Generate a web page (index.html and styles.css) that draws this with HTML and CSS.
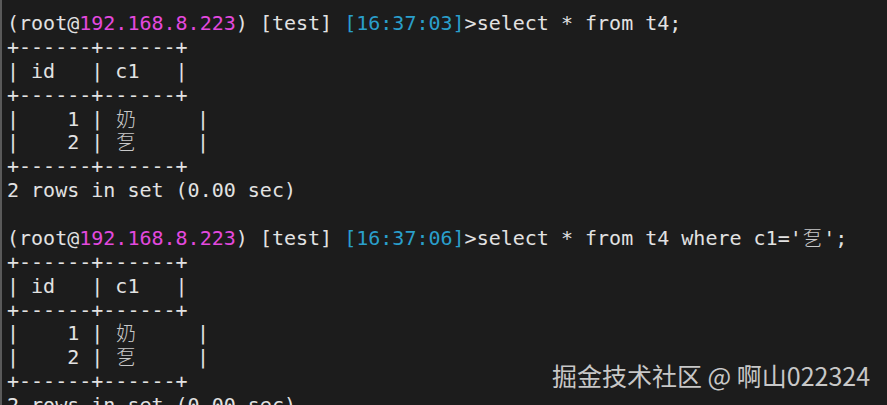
FILE: index.html
```html
<!DOCTYPE html>
<html lang="zh">
<head>
<meta charset="utf-8">
<link rel="stylesheet" href="styles.css">
</head>
<body>
<div class="term">
<div class="line">(root@<span class="ip">192.168.8.223</span>) [test] <span class="ts">[16:37:03]</span>&gt;select * from t4;</div>
<div class="line">+------+------+</div>
<div class="line">| id   | c1   |</div>
<div class="line">+------+------+</div>
<div class="line">|    1 | <span class="wide">奶</span>     |</div>
<div class="line">|    2 | <span class="wide">乭</span>     |</div>
<div class="line">+------+------+</div>
<div class="line">2 rows in set (0.00 sec)</div>
<div class="line"> </div>
<div class="line">(root@<span class="ip">192.168.8.223</span>) [test] <span class="ts">[16:37:06]</span>&gt;select * from t4 where c1='<span class="wide">乭</span>';</div>
<div class="line">+------+------+</div>
<div class="line">| id   | c1   |</div>
<div class="line">+------+------+</div>
<div class="line">|    1 | <span class="wide">奶</span>     |</div>
<div class="line">|    2 | <span class="wide">乭</span>     |</div>
<div class="line">+------+------+</div>
<div class="line">2 rows in set (0.00 sec)</div>
</div>
<div class="watermark">掘金技术社区 @ 啊山022324</div>
</body>
</html>
```
FILE: styles.css
```css
html, body {
  margin: 0;
  padding: 0;
  background: #1c1c1c;
  width: 887px;
  height: 405px;
  overflow: hidden;
}
body {
  position: relative;
}
.term {
  box-sizing: border-box;
  height: 405px;
  border-left: 2px solid #5a5a5a;
  padding: 12px 0 0 5px;
  font-family: "DejaVu Sans Mono", "Liberation Mono", monospace;
  font-size: 20px;
  line-height: 23.875px;
  color: #e2e2e2;
}
.line {
  white-space: pre;
  height: 23.875px;
}
.ip {
  color: #e349de;
}
.ts {
  color: #2a9fcb;
}
.wide {
  display: inline-block;
  width: 2ch;
  line-height: 20px;
  vertical-align: top;
  margin-top: 1px;
  text-align: center;
  font-family: "Noto Sans CJK SC", sans-serif;
  font-weight: 300;
  color: #c8c8c8;
}
.watermark {
  position: absolute;
  left: 552px;
  top: 359px;
  font-family: "Noto Sans CJK SC", "Noto Sans", sans-serif;
  font-size: 25px;
  line-height: 32px;
  color: rgba(225, 225, 225, 0.88);
  white-space: nowrap;
}
```
